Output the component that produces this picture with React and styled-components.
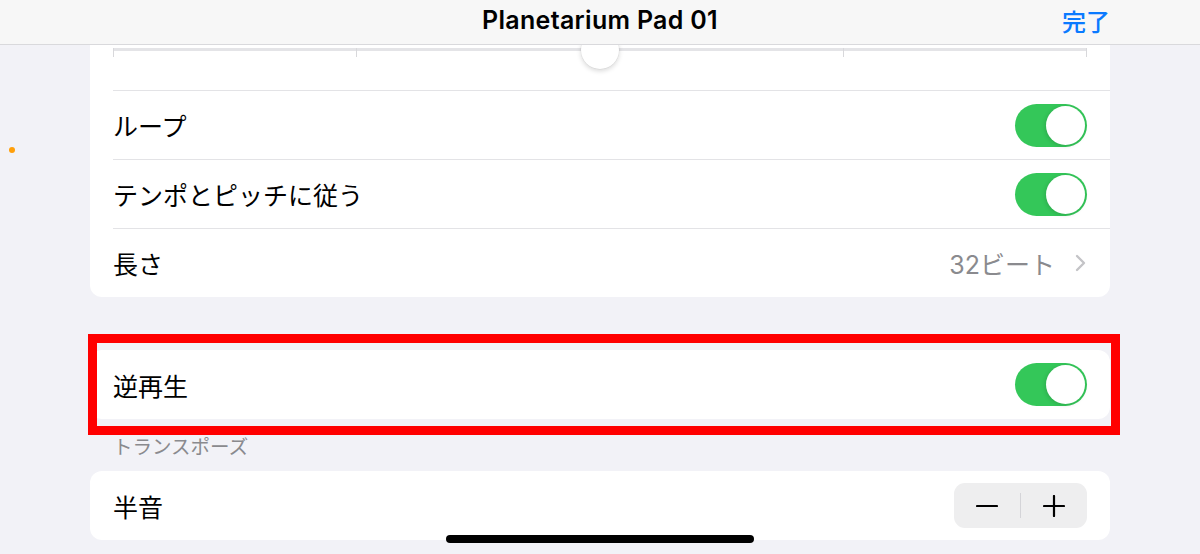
import React, { useState } from "react";
import styled, { createGlobalStyle } from "styled-components";

const GlobalStyle = createGlobalStyle`
  body {
    margin: 0;
    background: #f2f2f7;
    font-family: "Inter", "Noto Sans CJK JP", sans-serif;
  }
`;

const Screen = styled.div`
  position: relative;
  width: 1200px;
  height: 554px;
  overflow: hidden;
  background: #f2f2f7;
  display: flex;
  flex-direction: column;
`;

const NavBar = styled.header`
  height: 45px;
  flex-shrink: 0;
  box-sizing: border-box;
  display: grid;
  grid-template-columns: 1fr auto 1fr;
  align-items: center;
  padding: 0 90px 4px;
  background: #f7f7f7;
  border-bottom: 1px solid #d9d9dc;
  position: relative;
  z-index: 2;
`;

const Title = styled.h1`
  grid-column: 2;
  margin: 0;
  font-size: 25px;
  font-weight: 600;
  color: #000;
  letter-spacing: 0.3px;
`;

const DoneButton = styled.button`
  justify-self: end;
  background: none;
  border: none;
  padding: 0;
  font-family: inherit;
  font-size: 24px;
  font-weight: 500;
  color: #0a7aff;
  cursor: pointer;
`;

const Content = styled.main`
  flex: 1;
  overflow: hidden;
  padding: 0 90px;
`;

const Card = styled.section`
  background: #fff;
  border-radius: 12px;
  overflow: hidden;
  margin-top: ${(p) => p.$offset || 0}px;
`;

const SliderRow = styled.div`
  height: 59px;
  padding: 17px 23px 0;
  box-sizing: border-box;
`;

const Track = styled.div`
  position: relative;
  height: 3px;
  background: #e4e4e7;
  display: flex;
  justify-content: space-between;
`;

const Tick = styled.span`
  width: 1px;
  height: 9px;
  background: #d8d8db;
`;

const Knob = styled.span`
  position: absolute;
  left: 50%;
  top: 50%;
  width: 38px;
  height: 38px;
  margin: -19px 0 0 -19px;
  border-radius: 50%;
  background: #fff;
  box-shadow: 0 2px 5px rgba(0, 0, 0, 0.16), 0 0 0 0.5px rgba(0, 0, 0, 0.06);
`;

const Row = styled.div`
  height: 69px;
  box-sizing: border-box;
  margin-left: 23px;
  padding-right: 23px;
  display: flex;
  align-items: center;
  justify-content: space-between;
  border-top: ${(p) => (p.$divider ? "1px solid #e3e3e6" : "none")};
`;

const Label = styled.span`
  font-size: 25px;
  color: #000;
`;

const Detail = styled.span`
  display: flex;
  align-items: center;
  gap: 20px;
  font-size: 25px;
  color: #8a8a8e;
`;

const ToggleTrack = styled.button`
  width: 72px;
  height: 43px;
  padding: 2px;
  border: none;
  border-radius: 22px;
  background: ${(p) => (p.$on ? "#34c759" : "#e9e9ea")};
  display: flex;
  justify-content: ${(p) => (p.$on ? "flex-end" : "flex-start")};
  cursor: pointer;
`;

const ToggleThumb = styled.span`
  width: 39px;
  height: 39px;
  border-radius: 50%;
  background: #fff;
  box-shadow: -1px 1px 4px rgba(0, 0, 0, 0.15);
`;

const HighlightWrap = styled.div`
  position: relative;
  margin-top: 53px;
`;

const RedFrame = styled.div`
  position: absolute;
  top: -16px;
  bottom: -16px;
  left: -2px;
  right: -10px;
  border: 9px solid #ff0000;
  pointer-events: none;
`;

const SectionHeader = styled.div`
  padding: 18px 23px 14px;
  font-size: 19.5px;
  line-height: 20px;
  color: #8a8a8e;
`;

const Stepper = styled.div`
  width: 133px;
  height: 45px;
  border-radius: 11px;
  background: #eeeeef;
  display: flex;
  align-items: center;
`;

const StepButton = styled.button`
  flex: 1;
  height: 100%;
  border: none;
  background: none;
  display: flex;
  align-items: center;
  justify-content: center;
  cursor: pointer;
`;

const StepDivider = styled.span`
  width: 1px;
  height: 25px;
  background: #d4d4d8;
`;

const HomeIndicator = styled.div`
  position: absolute;
  left: 446px;
  top: 535px;
  width: 308px;
  height: 8px;
  border-radius: 4px;
  background: #000;
`;

const StatusDot = styled.span`
  position: absolute;
  left: 9px;
  top: 147px;
  width: 6px;
  height: 6px;
  border-radius: 50%;
  background: #ff9f0a;
`;

function Toggle({ on, onClick }) {
  return (
    <ToggleTrack $on={on} onClick={onClick}>
      <ToggleThumb />
    </ToggleTrack>
  );
}

const Chevron = () => (
  <svg width="12" height="18" viewBox="0 0 12 18">
    <path d="M2 2l7 7-7 7" fill="none" stroke="#c4c4c7" strokeWidth="2.4" strokeLinecap="round" strokeLinejoin="round" />
  </svg>
);

const MinusIcon = () => (
  <svg width="22" height="22" viewBox="0 0 22 22">
    <path d="M1 11h20" stroke="#000" strokeWidth="2.2" strokeLinecap="round" />
  </svg>
);

const PlusIcon = () => (
  <svg width="22" height="22" viewBox="0 0 22 22">
    <path d="M1 11h20M11 1v20" stroke="#000" strokeWidth="2.2" strokeLinecap="round" />
  </svg>
);

export default function App() {
  const [settings, setSettings] = useState({ loop: true, follow: true, reverse: true });
  const [semitone, setSemitone] = useState(0);

  const flip = (key) => setSettings((prev) => ({ ...prev, [key]: !prev[key] }));

  return (
    <Screen>
      <GlobalStyle />
      <NavBar>
        <Title>Planetarium Pad 01</Title>
        <DoneButton>完了</DoneButton>
      </NavBar>
      <Content>
        <Card $offset={-14}>
          <SliderRow>
            <Track>
              <Tick />
              <Tick />
              <Tick />
              <Tick />
              <Tick />
              <Knob />
            </Track>
          </SliderRow>
          <Row $divider>
            <Label>ループ</Label>
            <Toggle on={settings.loop} onClick={() => flip("loop")} />
          </Row>
          <Row $divider>
            <Label>テンポとピッチに従う</Label>
            <Toggle on={settings.follow} onClick={() => flip("follow")} />
          </Row>
          <Row $divider>
            <Label>長さ</Label>
            <Detail>
              32ビート
              <Chevron />
            </Detail>
          </Row>
        </Card>

        <HighlightWrap>
          <Card>
            <Row>
              <Label>逆再生</Label>
              <Toggle on={settings.reverse} onClick={() => flip("reverse")} />
            </Row>
          </Card>
          <RedFrame />
        </HighlightWrap>

        <SectionHeader>トランスポーズ</SectionHeader>
        <Card>
          <Row>
            <Label>半音</Label>
            <Stepper data-value={semitone}>
              <StepButton onClick={() => setSemitone((v) => v - 1)}>
                <MinusIcon />
              </StepButton>
              <StepDivider />
              <StepButton onClick={() => setSemitone((v) => v + 1)}>
                <PlusIcon />
              </StepButton>
            </Stepper>
          </Row>
        </Card>
      </Content>
      <StatusDot />
      <HomeIndicator />
    </Screen>
  );
}
